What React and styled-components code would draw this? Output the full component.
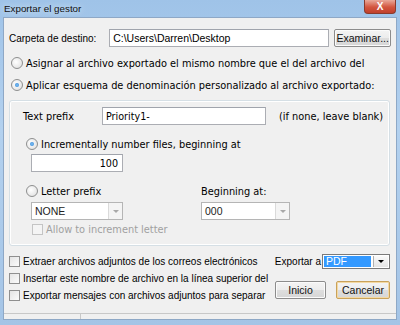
import React from 'react'
import styled, { createGlobalStyle, css } from 'styled-components'

const Global = createGlobalStyle`
  html, body { margin: 0; padding: 0; background: #fff; }
  body { width: 400px; height: 325px; overflow: hidden; }
`

const Frame = styled.div`
  width: 400px;
  height: 325px;
  box-sizing: border-box;
  display: flex;
  flex-direction: column;
  padding: 0 3px 5px 3px;
  background: linear-gradient(180deg, #9fc3e8 0%, #b3d1ef 40%, #a4c4e6 100%);
  font-family: "Liberation Sans", Arial, sans-serif;
  color: #000;
`

const TitleBar = styled.div`
  height: 17px;
  display: flex;
  align-items: center;
  justify-content: space-between;
  padding-left: 1px;
`

const Title = styled.span`
  font-size: 9.8px;
  color: #111;
  text-shadow: 0 0 6px #e8f2fc;
`

const CloseButton = styled.div`
  width: 30px;
  height: 13px;
  margin-top: -4px;
  margin-right: 1px;
  border-radius: 0 0 4px 4px;
  background: linear-gradient(180deg, #e9a99a 0%, #d3553e 55%, #c0402c 100%);
  border: 1px solid #8a3a2c;
  border-top: none;
  display: flex;
  align-items: center;
  justify-content: center;
  color: #fff;
  font-size: 10px;
  font-weight: bold;
`

const Client = styled.div`
  flex: 1;
  background: #f0f0f0;
  border: 1px solid #8ea8c6;
  display: flex;
  flex-direction: column;
  padding: 11px 5px 0 5px;
`

const Row = styled.div`
  display: flex;
  align-items: center;
  height: ${p => p.$h || 18}px;
  margin-top: ${p => p.$mt || 0}px;
  padding-left: ${p => p.$pl || 0}px;
  gap: ${p => p.$gap || 0}px;
`

const Label = styled.span`
  font-family: ${p => (p.$verdana ? '"DejaVu Sans", Verdana, sans-serif' : '"Liberation Sans", Arial, sans-serif')};
  font-size: ${p => (p.$verdana ? '9.8px' : '10px')};
  color: ${p => (p.$disabled ? '#a0a0a0' : '#000')};
  width: ${p => (p.$w ? p.$w + 'px' : 'auto')};
  white-space: nowrap;
`

const TextBox = styled.div`
  box-sizing: border-box;
  width: ${p => p.$w}px;
  height: 18px;
  background: #fff;
  border: 1px solid #abadb3;
  border-top-color: #a0a4ac;
  display: flex;
  align-items: center;
  justify-content: ${p => (p.$right ? 'flex-end' : 'flex-start')};
  padding: 0 4px 0 3px;
  font-family: ${p => (p.$verdana ? '"DejaVu Sans", Verdana, sans-serif' : '"Liberation Sans", Arial, sans-serif')};
  font-size: ${p => (p.$verdana ? '9.6px' : '10.5px')};
`

const Button = styled.div`
  box-sizing: border-box;
  width: ${p => p.$w}px;
  height: 18px;
  border-radius: 2px;
  border: 1px solid ${p => (p.$default ? '#c9a25a' : '#8c8c8c')};
  box-shadow: ${p => (p.$default ? 'inset 0 0 0 1px #f4d9a4' : 'inset 0 0 0 1px #fbfbfb')};
  background: linear-gradient(180deg, #f4f4f4 0%, #ececec 50%, #dedede 51%, #d6d6d6 100%);
  display: flex;
  align-items: center;
  justify-content: center;
  font-size: 10.5px;
  color: #111;
`

const Radio = styled.span`
  box-sizing: border-box;
  width: 12px;
  height: 12px;
  border-radius: 50%;
  border: 1px solid #8e8f8f;
  background: radial-gradient(circle at 40% 40%, #ffffff 0%, #e6e6e6 70%, #d2d2d2 100%);
  display: inline-flex;
  align-items: center;
  justify-content: center;
  margin-right: 3px;
  flex-shrink: 0;
  ${p => p.$on && css`
    &::after {
      content: '';
      width: 4px;
      height: 4px;
      border-radius: 50%;
      background: radial-gradient(circle, #7fc1f4 0%, #2a7fd4 100%);
    }
  `}
`

const Check = styled.span`
  box-sizing: border-box;
  width: 11px;
  height: 11px;
  border: 1px solid ${p => (p.$disabled ? '#c4c4c4' : '#8f8f8f')};
  background: ${p => (p.$disabled ? '#f4f4f4' : 'linear-gradient(135deg, #e4e4e4 0%, #fbfbfb 100%)')};
  margin-right: 3px;
  flex-shrink: 0;
`

const Group = styled.div`
  margin: 6px 1px 0 0;
  border: 1px solid #d5dfe5;
  border-radius: 3px;
  box-shadow: inset 0 0 0 1px #fff;
  display: flex;
  flex-direction: column;
  padding: 6px 0 7px 13px;
`

const Combo = styled.div`
  box-sizing: border-box;
  width: ${p => p.$w}px;
  height: ${p => (p.$dark ? 15 : 18)}px;
  background: #fff;
  border: 1px solid ${p => (p.$dark ? '#7a7a7a' : '#b5b5b5')};
  display: flex;
  align-items: stretch;
  padding: ${p => (p.$dark ? '1px' : '0')};
`

const ComboText = styled.div`
  flex: 1;
  display: flex;
  align-items: center;
  padding-left: ${p => (p.$sel ? '2px' : '3px')};
  font-family: "Liberation Sans", Arial, sans-serif;
  font-size: 10.5px;
  color: ${p => (p.$sel ? '#fff' : '#222')};
  background: ${p => (p.$sel ? '#3399ff' : 'transparent')};
`

const ComboArrow = styled.div`
  box-sizing: border-box;
  width: ${p => (p.$dark ? 15 : 14)}px;
  margin-left: ${p => (p.$dark ? 2 : 0)}px;
  border-left: 1px solid ${p => (p.$dark ? '#b0b0b0' : '#dadada')};
  background: ${p => (p.$dark ? 'linear-gradient(180deg,#fafafa,#e4e4e4)' : '#f4f4f4')};
  display: flex;
  align-items: center;
  justify-content: center;
  &::after {
    content: '';
    border-left: 3px solid transparent;
    border-right: 3px solid transparent;
    border-top: 3px solid ${p => (p.$dark ? '#000' : '#a8a8a8')};
  }
`

const Column = styled.div`
  display: flex;
  flex-direction: column;
  width: ${p => p.$w}px;
`

const Split = styled.div`
  display: flex;
  margin-top: ${p => p.$mt || 0}px;
`

const BottomArea = styled.div`
  display: flex;
  justify-content: space-between;
  margin-top: 7px;
`

const ChecksCol = styled.div`
  display: flex;
  flex-direction: column;
  gap: 1px;
`

const ActionsCol = styled.div`
  display: flex;
  flex-direction: column;
  align-items: flex-end;
  padding-right: 1px;
`

const StatusBar = styled.div`
  margin: auto -5px 0 -5px;
  height: 5px;
  border-top: 1px solid #c8c8c8;
  display: grid;
  grid-template-columns: 77px 1fr;
`

const StatusCell = styled.div`
  border-right: 1px solid #c8c8c8;
  &:last-child { border-right: none; }
`

export default function App() {
  return (
    <>
      <Global />
      <Frame>
        <TitleBar>
          <Title>Exportar el gestor</Title>
          <CloseButton>X</CloseButton>
        </TitleBar>
        <Client>
          <Row $gap={0}>
            <Label $w={101}>Carpeta de destino:</Label>
            <TextBox $w={222}>C:\Users\Darren\Desktop</TextBox>
            <Button $w={57} style={{ marginLeft: 5 }}>Examinar...</Button>
          </Row>
          <Row $mt={7} $pl={2}>
            <Radio />
            <Label $verdana>Asignar al archivo exportado el mismo nombre que el del archivo del</Label>
          </Row>
          <Row $mt={4} $pl={2}>
            <Radio $on />
            <Label $verdana>Aplicar esquema de denominación personalizado al archivo exportado:</Label>
          </Row>
          <Group>
            <Row>
              <Label $verdana $w={79}>Text prefix</Label>
              <TextBox $w={164} $verdana>Priority1-</TextBox>
              <Label $verdana style={{ marginLeft: 13 }}>(if none, leave blank)</Label>
            </Row>
            <Row $mt={10} $pl={3}>
              <Radio $on />
              <Label $verdana>Incrementally number files, beginning at</Label>
            </Row>
            <Row $mt={1} $pl={8}>
              <TextBox $w={92} $right $verdana>100</TextBox>
            </Row>
            <Split $mt={10}>
              <Column $w={178}>
                <Row $pl={3}>
                  <Radio />
                  <Label $verdana>Letter prefix</Label>
                </Row>
                <Row $mt={2} $pl={8}>
                  <Combo $w={92}>
                    <ComboText>NONE</ComboText>
                    <ComboArrow />
                  </Combo>
                </Row>
              </Column>
              <Column $w={120}>
                <Row>
                  <Label $verdana>Beginning at:</Label>
                </Row>
                <Row $mt={2}>
                  <Combo $w={89}>
                    <ComboText>000</ComboText>
                    <ComboArrow />
                  </Combo>
                </Row>
              </Column>
            </Split>
            <Row $mt={0} $pl={9}>
              <Check $disabled />
              <Label $verdana $disabled>Allow to increment letter</Label>
            </Row>
          </Group>
          <BottomArea>
            <ChecksCol>
              <Row $h={16}>
                <Check />
                <Label>Extraer archivos adjuntos de los correos electrónicos</Label>
              </Row>
              <Row $h={16}>
                <Check />
                <Label>Insertar este nombre de archivo en la línea superior del</Label>
              </Row>
              <Row $h={16}>
                <Check />
                <Label>Exportar mensajes con archivos adjuntos para separar</Label>
              </Row>
            </ChecksCol>
            <ActionsCol>
              <Row $h={16} $gap={1}>
                <Label>Exportar a</Label>
                <Combo $w={68} $dark>
                  <ComboText $sel>PDF</ComboText>
                  <ComboArrow $dark />
                </Combo>
              </Row>
              <Row $mt={12} $gap={10}>
                <Button $w={51}>Inicio</Button>
                <Button $w={54} $default>Cancelar</Button>
              </Row>
            </ActionsCol>
          </BottomArea>
          <StatusBar>
            <StatusCell />
            <StatusCell />
          </StatusBar>
        </Client>
      </Frame>
    </>
  )
}
